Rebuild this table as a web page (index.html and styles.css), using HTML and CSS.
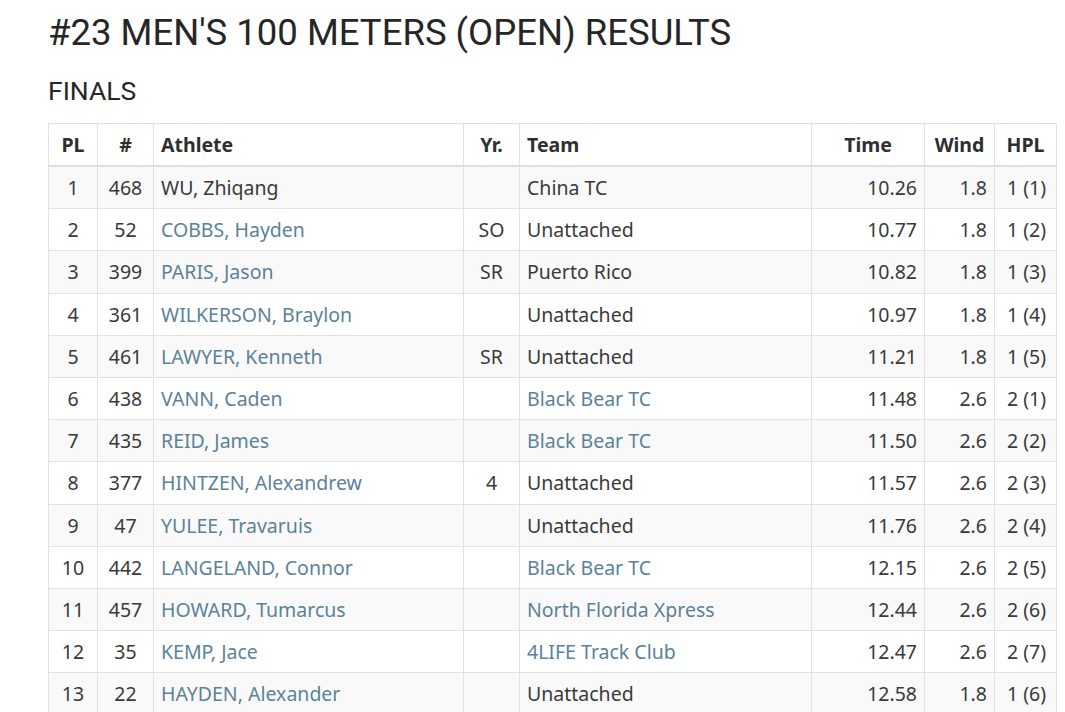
FILE: index.html
```html
<!DOCTYPE html>
<html>
<head>
<meta charset="utf-8">
<link rel="stylesheet" href="styles.css">
</head>
<body>
<div class="page">
  <h1 class="title">#23 MEN'S 100 METERS (OPEN) RESULTS</h1>
  <h2 class="subtitle">FINALS</h2>
  <table class="results">
    <colgroup>
      <col class="c-pl"><col class="c-num"><col class="c-ath"><col class="c-yr"><col class="c-team"><col class="c-time"><col class="c-wind"><col class="c-hpl">
    </colgroup>
    <thead>
      <tr><th class="ctr">PL</th><th class="ctr">#</th><th class="lft">Athlete</th><th class="ctr">Yr.</th><th class="lft">Team</th><th class="ctr">Time</th><th class="ctr">Wind</th><th class="ctr">HPL</th></tr>
    </thead>
    <tbody>
      <tr><td class="ctr">1</td><td class="ctr">468</td><td>WU, Zhiqang</td><td class="ctr"></td><td>China TC</td><td class="rgt">10.26</td><td class="rgt">1.8</td><td class="lft2">1 (1)</td></tr>
      <tr><td class="ctr">2</td><td class="ctr">52</td><td><a>COBBS, Hayden</a></td><td class="ctr">SO</td><td>Unattached</td><td class="rgt">10.77</td><td class="rgt">1.8</td><td class="lft2">1 (2)</td></tr>
      <tr><td class="ctr">3</td><td class="ctr">399</td><td><a>PARIS, Jason</a></td><td class="ctr">SR</td><td>Puerto Rico</td><td class="rgt">10.82</td><td class="rgt">1.8</td><td class="lft2">1 (3)</td></tr>
      <tr><td class="ctr">4</td><td class="ctr">361</td><td><a>WILKERSON, Braylon</a></td><td class="ctr"></td><td>Unattached</td><td class="rgt">10.97</td><td class="rgt">1.8</td><td class="lft2">1 (4)</td></tr>
      <tr><td class="ctr">5</td><td class="ctr">461</td><td><a>LAWYER, Kenneth</a></td><td class="ctr">SR</td><td>Unattached</td><td class="rgt">11.21</td><td class="rgt">1.8</td><td class="lft2">1 (5)</td></tr>
      <tr><td class="ctr">6</td><td class="ctr">438</td><td><a>VANN, Caden</a></td><td class="ctr"></td><td><a>Black Bear TC</a></td><td class="rgt">11.48</td><td class="rgt">2.6</td><td class="lft2">2 (1)</td></tr>
      <tr><td class="ctr">7</td><td class="ctr">435</td><td><a>REID, James</a></td><td class="ctr"></td><td><a>Black Bear TC</a></td><td class="rgt">11.50</td><td class="rgt">2.6</td><td class="lft2">2 (2)</td></tr>
      <tr><td class="ctr">8</td><td class="ctr">377</td><td><a>HINTZEN, Alexandrew</a></td><td class="ctr">4</td><td>Unattached</td><td class="rgt">11.57</td><td class="rgt">2.6</td><td class="lft2">2 (3)</td></tr>
      <tr><td class="ctr">9</td><td class="ctr">47</td><td><a>YULEE, Travaruis</a></td><td class="ctr"></td><td>Unattached</td><td class="rgt">11.76</td><td class="rgt">2.6</td><td class="lft2">2 (4)</td></tr>
      <tr><td class="ctr">10</td><td class="ctr">442</td><td><a>LANGELAND, Connor</a></td><td class="ctr"></td><td><a>Black Bear TC</a></td><td class="rgt">12.15</td><td class="rgt">2.6</td><td class="lft2">2 (5)</td></tr>
      <tr><td class="ctr">11</td><td class="ctr">457</td><td><a>HOWARD, Tumarcus</a></td><td class="ctr"></td><td><a>North Florida Xpress</a></td><td class="rgt">12.44</td><td class="rgt">2.6</td><td class="lft2">2 (6)</td></tr>
      <tr><td class="ctr">12</td><td class="ctr">35</td><td><a>KEMP, Jace</a></td><td class="ctr"></td><td><a>4LIFE Track Club</a></td><td class="rgt">12.47</td><td class="rgt">2.6</td><td class="lft2">2 (7)</td></tr>
      <tr><td class="ctr">13</td><td class="ctr">22</td><td><a>HAYDEN, Alexander</a></td><td class="ctr"></td><td>Unattached</td><td class="rgt">12.58</td><td class="rgt">1.8</td><td class="lft2">1 (6)</td></tr>
    </tbody>
  </table>
</div>
</body>
</html>
```

FILE: styles.css
```css
html, body {
  margin: 0;
  padding: 0;
  background: #ffffff;
}
body {
  font-family: "Noto Sans", "Open Sans", sans-serif;
  color: #333333;
}
.page {
  padding: 10px 9px 0 48px;
}
.title {
  margin: 0;
  font-family: Roboto, "Noto Sans", sans-serif;
  font-size: 36.5px;
  font-weight: 400;
  line-height: 46px;
  color: #262626;
  letter-spacing: 0;
}
.subtitle {
  margin: 18px 0 0 0;
  font-family: Roboto, "Noto Sans", sans-serif;
  font-size: 26.5px;
  font-weight: 400;
  line-height: 34px;
  color: #262626;
}
.results {
  margin-top: 15px;
  border-collapse: collapse;
  table-layout: fixed;
  width: 1008px;
  font-size: 19.5px;
  border-top: 1px solid #e2e2e2;
}
.c-pl { width: 49px; }
.c-num { width: 56px; }
.c-ath { width: 310px; }
.c-yr { width: 56px; }
.c-team { width: 292px; }
.c-time { width: 113px; }
.c-wind { width: 70px; }
.c-hpl { width: 62px; }
.results th, .results td {
  border: 1px solid #e2e2e2;
  padding: 0 7px;
  white-space: nowrap;
  overflow: hidden;
}
.results th {
  height: 41px;
  font-weight: 700;
  color: #2f2f2f;
  border-bottom: 2px solid #dddddd;
}
.results td {
  height: 41.2px;
  color: #3a3a3a;
}
.results tbody tr:nth-child(odd) td {
  background: #f9f9f9;
}
.ctr { text-align: center; }
.lft { text-align: left; }
.rgt { text-align: right; }
.lft2 { text-align: left; padding-left: 12px !important; }
.results a {
  color: #5b8299;
  text-decoration: none;
}
```
